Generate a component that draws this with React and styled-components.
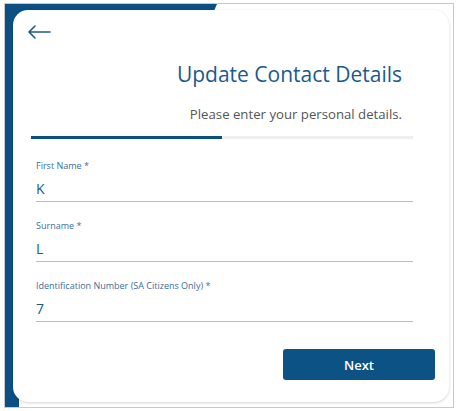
import React from 'react'
import styled, { createGlobalStyle } from 'styled-components'

const GlobalStyle = createGlobalStyle`
    body {
        margin: 0;
        background: #ffffff;
        font-family: "Open Sans", "Liberation Sans", sans-serif;
    }
`;

const Frame = styled.div`
    position: relative;
    margin: 3px 0 0 4px;
    width: 450px;
    height: 405px;
    border: 1px solid #c9c9c9;
    padding: 6px 4px 5px 8px;
    box-sizing: border-box;
    display: flex;

    &::before {
        content: "";
        position: absolute;
        inset: 0;
        background: #0c4f82;
        clip-path: polygon(0 0, 212px 0, 206px 14px, 14px 14px, 14px 100%, 0 100%);
    }
`;

const Card = styled.div`
    position: relative;
    flex: 1;
    background: #fff;
    border-radius: 15px;
    box-shadow: 0 1px 3px rgba(0, 0, 0, 0.18);
    padding: 12px 36px 0 18px;
    display: flex;
    flex-direction: column;
`;

const BackButton = styled.button`
    align-self: flex-start;
    border: none;
    background: none;
    padding: 0;
    margin-left: -4px;
    width: 24px;
    height: 20px;
    color: #1b5a8c;
    cursor: pointer;
`;

const Title = styled.h1`
    margin: 18px 11px 0 0;
    text-align: right;
    font-size: 21px;
    font-weight: 400;
    color: #1b5a8c;
    line-height: 28px;
`;

const Subtitle = styled.p`
    margin: 17px 11px 0 0;
    text-align: right;
    font-size: 13.2px;
    color: #555;
    line-height: 18px;
`;

const Track = styled.div`
    margin-top: 13px;
    height: 3px;
    background: #efefef;
`;

const Fill = styled.div`
    height: 100%;
    background: #0c4f82;
`;

const Fields = styled.div`
    margin-top: 20px;
    padding-left: 5px;
    display: flex;
    flex-direction: column;
    gap: 17px;
`;

const Field = styled.label`
    display: flex;
    flex-direction: column;
`;

const Label = styled.span`
    font-size: 9px;
    line-height: 13px;
    color: #3b6d9a;
`;

const Value = styled.span`
    margin-top: 7px;
    font-size: 14px;
    line-height: 20px;
    color: #1b5a8c;
    border-bottom: 1.5px solid #bdbdbd;
    padding-bottom: 2px;
`;

const Footer = styled.div`
    margin-top: 27px;
    display: flex;
    justify-content: flex-end;
    margin-right: -22px;
`;

const NextButton = styled.button`
    width: 152px;
    height: 31px;
    border: none;
    border-radius: 3px;
    background: #0c5285;
    color: #fff;
    font-family: "Open Sans", "Liberation Sans", sans-serif;
    font-size: 13px;
    font-weight: 600;
    cursor: pointer;
`;

const fields = [
    { label: 'First Name *', value: 'K' },
    { label: 'Surname *', value: 'L' },
    { label: 'Identification Number (SA Citizens Only) *', value: '7' },
];

export default function App() {
    const progress = 0.5;
    return (
        <>
            <GlobalStyle />
            <Frame>
                <Card>
                    <BackButton aria-label="Back">
                        <svg width="24" height="20" viewBox="0 0 24 20" fill="none" stroke="currentColor" strokeWidth="1.6" strokeLinecap="round" strokeLinejoin="round">
                            <path d="M23 10H2M8 4L2 10L8 16" />
                        </svg>
                    </BackButton>
                    <Title>Update Contact Details</Title>
                    <Subtitle>Please enter your personal details.</Subtitle>
                    <Track>
                        <Fill style={{ width: `${progress * 100}%` }} />
                    </Track>
                    <Fields>
                        {fields.map((f) => (
                            <Field key={f.label}>
                                <Label>{f.label}</Label>
                                <Value>{f.value}</Value>
                            </Field>
                        ))}
                    </Fields>
                    <Footer>
                        <NextButton>Next</NextButton>
                    </Footer>
                </Card>
            </Frame>
        </>
    );
}
